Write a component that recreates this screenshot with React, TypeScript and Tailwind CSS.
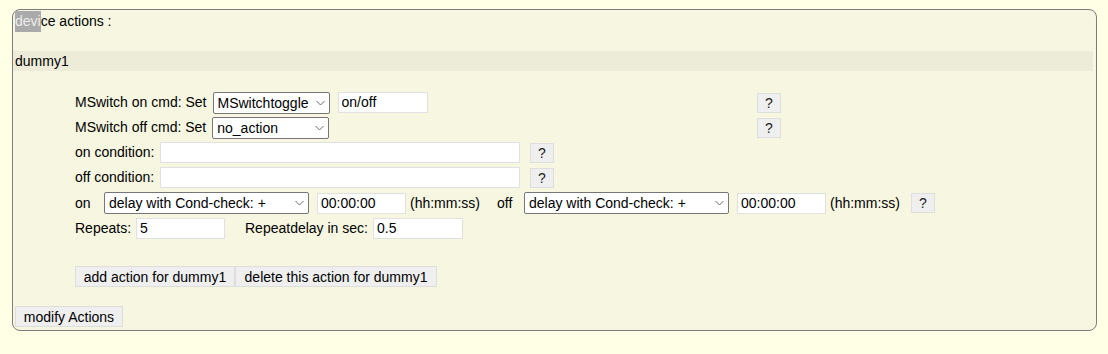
import React from 'react';

const font = { fontFamily: '"Liberation Sans", Arial, sans-serif' };

function Chevron() {
  return (
    <svg className="pointer-events-none absolute right-[5px] top-1/2 -translate-y-1/2" width="9" height="5" viewBox="0 0 9 5">
      <path d="M0.5 0.5 L4.5 4.5 L8.5 0.5" fill="none" stroke="#6b6b6b" strokeWidth="1" />
    </svg>
  );
}

function Select({ value, width }: { value: string; width: string }) {
  return (
    <div className={`relative h-[22px] ${width}`}>
      <select
        defaultValue={value}
        className="h-full w-full appearance-none rounded-[2px] border border-[#767676] bg-white pl-[4px] pr-0 text-[14px] leading-normal text-black outline-none"
      >
        <option>{value}</option>
      </select>
      <Chevron />
    </div>
  );
}

function TextInput({ value, width }: { value?: string; width: string }) {
  return (
    <input
      defaultValue={value}
      className={`h-[21px] ${width} border border-[#e1e1e1] bg-white px-[3px] text-[14px] leading-normal text-black outline-none`}
    />
  );
}

function HelpButton({ className = '' }: { className?: string }) {
  return (
    <button className={`h-[20px] w-[24px] border border-[#dedede] bg-[#efefef] text-[14px] leading-none text-[#222] ${className}`}>
      ?
    </button>
  );
}

function Btn({ children, className = '' }: { children: React.ReactNode; className?: string }) {
  return (
    <button className={`h-[21px] border border-[#dedede] bg-[#efefef] text-[14px] leading-none text-black ${className}`}>
      {children}
    </button>
  );
}

export default function App() {
  return (
    <main className="min-h-screen bg-[#ffffe6] pl-[12px] pt-[9px] text-[14px] text-black" style={font}>
      <div className="flex h-[322px] w-[1085px] flex-col rounded-[8px] border border-[#7c7c7c] bg-[#f6f6e1]">

        {/* header */}
        <div className="flex h-[23px] items-center pl-[2px]">
          <span className="bg-[#aaaaaa] text-[#ececec]">devi</span>
          <span>ce actions :</span>
        </div>

        {/* device band */}
        <div className="mr-[3px] mt-[18px] flex h-[20px] items-center bg-[#ececd9] pl-[2px]">dummy1</div>

        {/* form rows */}
        <div className="mt-[19px] flex flex-col pl-[62px]">
          <div className="flex h-[25px] items-center">
            <div className="flex w-[682px] items-center">
              <span>MSwitch on cmd: Set</span>
              <div className="ml-[6px]"><Select value="MSwitchtoggle" width="w-[117px]" /></div>
              <div className="ml-[8px]"><TextInput value="on/off" width="w-[90px]" /></div>
            </div>
            <HelpButton />
          </div>

          <div className="flex h-[25px] items-center">
            <div className="flex w-[682px] items-center">
              <span>MSwitch off cmd: Set</span>
              <div className="ml-[6px]"><Select value="no_action" width="w-[117px]" /></div>
            </div>
            <HelpButton />
          </div>

          <div className="flex h-[25px] items-center">
            <span className="w-[85px]">on condition:</span>
            <TextInput width="w-[360px]" />
            <HelpButton className="ml-[10px]" />
          </div>

          <div className="flex h-[25px] items-center">
            <span className="w-[85px]">off condition:</span>
            <TextInput width="w-[360px]" />
            <HelpButton className="ml-[10px]" />
          </div>

          <div className="flex h-[26px] items-center">
            <span className="w-[29px]">on</span>
            <Select value="delay with Cond-check: +" width="w-[205px]" />
            <div className="ml-[8px]"><TextInput value="00:00:00" width="w-[89px]" /></div>
            <span className="ml-[4px]">(hh:mm:ss)</span>
            <span className="ml-[17px] w-[27px]">off</span>
            <Select value="delay with Cond-check: +" width="w-[205px]" />
            <div className="ml-[8px]"><TextInput value="00:00:00" width="w-[89px]" /></div>
            <span className="ml-[4px]">(hh:mm:ss)</span>
            <HelpButton className="ml-[11px]" />
          </div>

          <div className="flex h-[25px] items-center">
            <span className="w-[61px]">Repeats:</span>
            <TextInput value="5" width="w-[89px]" />
            <span className="ml-[20px] w-[128px]">Repeatdelay in sec:</span>
            <TextInput value="0.5" width="w-[90px]" />
          </div>

          <div className="mt-[25px] flex">
            <Btn className="w-[160px]">add action for dummy1</Btn>
            <Btn className="w-[202px]">delete this action for dummy1</Btn>
          </div>
        </div>

        <div className="mt-[19px] pl-[2px]">
          <Btn className="w-[108px]">modify Actions</Btn>
        </div>
      </div>
    </main>
  );
}
